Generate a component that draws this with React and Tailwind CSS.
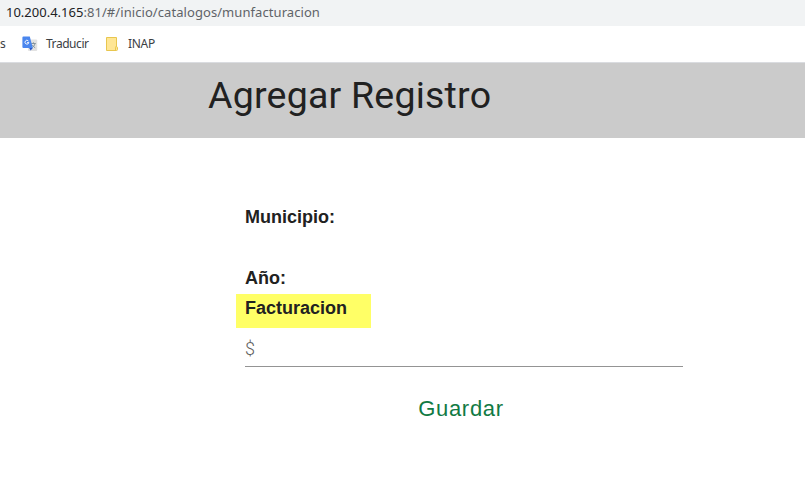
function TranslateIcon() {
  return (
    <svg className="block h-4 w-4 shrink-0" viewBox="0 0 16 16">
      <rect x="6" y="3.5" width="9.2" height="11.5" rx="1" fill="#e2e2e2" />
      <path d="M9.2 7.5h4.6M11.4 6.3v1.2M13 7.7c-.5 2-1.6 3.2-3.2 4M10.3 9c.8 1.2 1.6 2.1 2.9 2.8" stroke="#7d8d97" strokeWidth="0.9" fill="none" />
      <path d="M1.4 0.6h6.4l3 11.4H1.4a1 1 0 0 1-1-1V1.6a1 1 0 0 1 1-1z" fill="#4a86ee" />
      <path d="M7.2 12h3.6l-2.2 2.6z" fill="#2a56c6" />
      <path d="M6.4 5a1.9 1.9 0 1 0 .4 1.5H5.1" stroke="#fff" strokeWidth="0.9" fill="none" />
    </svg>
  );
}

function FolderIcon() {
  return (
    <svg className="block h-[14px] w-3 shrink-0" viewBox="0 0 12 14">
      <path d="M.5.5h10v9.2a1 1 0 0 1 1 1v1.8a1 1 0 0 1-1 1H.5z" fill="#ffe694" stroke="#e8c64f" />
      <path d="M9.5 13.5v-3.2a.7.7 0 0 1 1-.6" fill="none" stroke="#e8c64f" />
    </svg>
  );
}

export default function App() {
  return (
    <div className="h-[492px] w-[805px] overflow-hidden bg-white font-['Roboto',sans-serif] text-[#212121]">
      <div className="flex h-[26px] items-start bg-[#f1f3f4] pl-[6px] font-['Noto_Sans',sans-serif] text-[13px] leading-[25px] whitespace-nowrap text-[#5f6368]">
        <span className="text-[#202124]">10.200.4.165</span>
        <span className="tracking-[0.07px]">:81/#/inicio/catalogos/munfacturacion</span>
      </div>
      <div className="flex h-[37px] items-center border-b border-[#dadce0] font-['Noto_Sans',sans-serif] text-[12px] leading-4 tracking-[-0.45px] text-[#3c4043]">
        <span className="w-[22px] shrink-0">s</span>
        <TranslateIcon />
        <span className="ml-2 w-[60px] shrink-0">Traducir</span>
        <FolderIcon />
        <span className="ml-[10px] tracking-[-0.3px]">INAP</span>
      </div>
      <header className="h-[75px] bg-[#cbcbcb] pt-[8px] pl-[208px]">
        <h1 className="text-[37.5px] leading-[48px] font-normal tracking-[0.22px] whitespace-nowrap">Agregar Registro</h1>
      </header>
      <main className="ml-[236px] flex w-[447px] flex-col pt-[62px] font-['Liberation_Sans',Arial,sans-serif]">
        <label className="h-[61px] pl-[9px] text-[18px] leading-[34px] font-bold">Municipio:</label>
        <label className="h-[33px] pl-[9px] text-[18px] leading-[34px] font-bold">Año:</label>
        <label className="h-[34px] w-[135px] bg-[#ffff66] pl-[9px] text-[18px] leading-[28px] font-bold">Facturacion</label>
        <div className="ml-[9px] h-[39px] border-b border-[#949494] pt-[9px] font-['Roboto',sans-serif] text-[18px] leading-6 font-light text-[#616161]">$</div>
        <button className="mt-[24px] ml-[9px] w-[432px] text-center text-[22px] leading-[36px] tracking-[0.7px] text-[#117a43]">Guardar</button>
      </main>
    </div>
  );
}
